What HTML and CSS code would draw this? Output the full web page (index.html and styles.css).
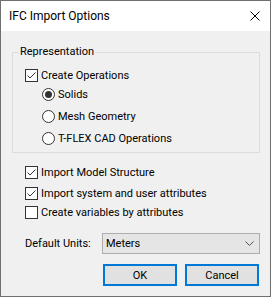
FILE: index.html
```html
<!DOCTYPE html>
<html lang="en">
<head>
    <meta charset="UTF-8">
    <title>IFC Import Options</title>
    <link rel="stylesheet" href="styles.css">
</head>
<body>
    <div class="dialog">
        <div class="titlebar">
            <span class="title">IFC Import Options</span>
            <svg class="close" width="10" height="10" viewBox="0 0 10 10">
                <path d="M0.5 0.5 L9.5 9.5 M9.5 0.5 L0.5 9.5" stroke="#000" stroke-width="1" fill="none"/>
            </svg>
        </div>

        <div class="content">
            <fieldset class="group">
                <legend>Representation</legend>
                <label class="option check-row">
                    <span class="box"><svg width="11" height="11" viewBox="0 0 11 11"><path d="M1.5 5.5 L4 8 L9.5 2.5" stroke="#333" stroke-width="1" fill="none"/></svg></span>
                    Create Operations
                </label>
                <div class="radios">
                    <label class="option"><span class="radio on"></span>Solids</label>
                    <label class="option"><span class="radio"></span>Mesh Geometry</label>
                    <label class="option"><span class="radio"></span>T-FLEX CAD Operations</label>
                </div>
            </fieldset>

            <div class="checks">
                <label class="option">
                    <span class="box"><svg width="11" height="11" viewBox="0 0 11 11"><path d="M1.5 5.5 L4 8 L9.5 2.5" stroke="#333" stroke-width="1" fill="none"/></svg></span>
                    Import Model Structure
                </label>
                <label class="option">
                    <span class="box"><svg width="11" height="11" viewBox="0 0 11 11"><path d="M1.5 5.5 L4 8 L9.5 2.5" stroke="#333" stroke-width="1" fill="none"/></svg></span>
                    Import system and user attributes
                </label>
                <label class="option last">
                    <span class="box"></span>
                    Create variables by attributes
                </label>
            </div>

            <div class="units">
                <span class="units-label">Default Units:</span>
                <div class="combo">
                    <span>Meters</span>
                    <svg width="9" height="5" viewBox="0 0 9 5"><path d="M0.5 0.5 L4.5 4.5 L8.5 0.5" stroke="#555" stroke-width="1" fill="none"/></svg>
                </div>
            </div>

            <div class="buttons">
                <button class="btn">OK</button>
                <button class="btn">Cancel</button>
            </div>
        </div>
    </div>
</body>
</html>
```

FILE: styles.css
```css
body {
    margin: 0;
    font-family: "Segoe UI", Roboto, "Liberation Sans", sans-serif;
    font-size: 11px;
    color: #000;
    background-color: #f0f0f0;
}
.dialog {
    width: 271px;
    height: 297px;
    box-sizing: border-box;
    border: 1px solid #707070;
    background-color: #f0f0f0;
}
.titlebar {
    height: 30px;
    display: flex;
    align-items: center;
    justify-content: space-between;
    padding: 0 10px 0 8px;
    background-color: #fff;
}
.title {
    font-size: 12px;
    line-height: 30px;
}
.close {
    display: block;
}
.content {
    padding: 0 10px 0 11px;
}
.group {
    margin: 13px 0 0;
    padding: 5px 0 3px;
    border: 1px solid #dcdcdc;
    width: 248px;
    box-sizing: border-box;
}
.group legend {
    margin-left: 6px;
    padding: 0 1px;
    line-height: 16px;
}
.option {
    display: flex;
    align-items: center;
    height: 22px;
}
.check-row {
    height: 20px;
    padding-left: 12px;
}
.radios {
    margin-top: -2px;
    padding-left: 29px;
}
.box {
    width: 13px;
    height: 13px;
    box-sizing: border-box;
    border: 1px solid #333;
    background-color: #fff;
    margin-right: 3px;
    display: flex;
    align-items: center;
    justify-content: center;
}
.box svg {
    display: block;
}
.radio {
    width: 13px;
    height: 13px;
    box-sizing: border-box;
    border: 1px solid #333;
    border-radius: 50%;
    background-color: #fff;
    margin-right: 3px;
    display: flex;
    align-items: center;
    justify-content: center;
}
.radio.on::after {
    content: "";
    width: 7px;
    height: 7px;
    border-radius: 50%;
    background-color: #333;
}
.checks {
    margin-top: 9px;
    padding-left: 13px;
}
.checks .option {
    height: 21px;
}
.checks .last {
    margin-top: -2px;
}
.units {
    margin-top: 10px;
    display: flex;
    align-items: center;
    padding-left: 13px;
    height: 21px;
}
.units-label {
    width: 77px;
}
.combo {
    flex: 1;
    height: 21px;
    box-sizing: border-box;
    border: 1px solid #adadad;
    background-color: #e5e5e5;
    display: flex;
    align-items: center;
    justify-content: space-between;
    padding: 0 5px 0 3px;
}
.buttons {
    margin-top: 10px;
    display: flex;
    justify-content: flex-end;
    gap: 8px;
    padding-right: 1px;
}
.btn {
    width: 74px;
    height: 22px;
    box-sizing: border-box;
    border: 2px solid #0078d7;
    background-color: #e1e1e1;
    font-family: inherit;
    font-size: 11px;
    color: #000;
    padding: 0;
}
```
